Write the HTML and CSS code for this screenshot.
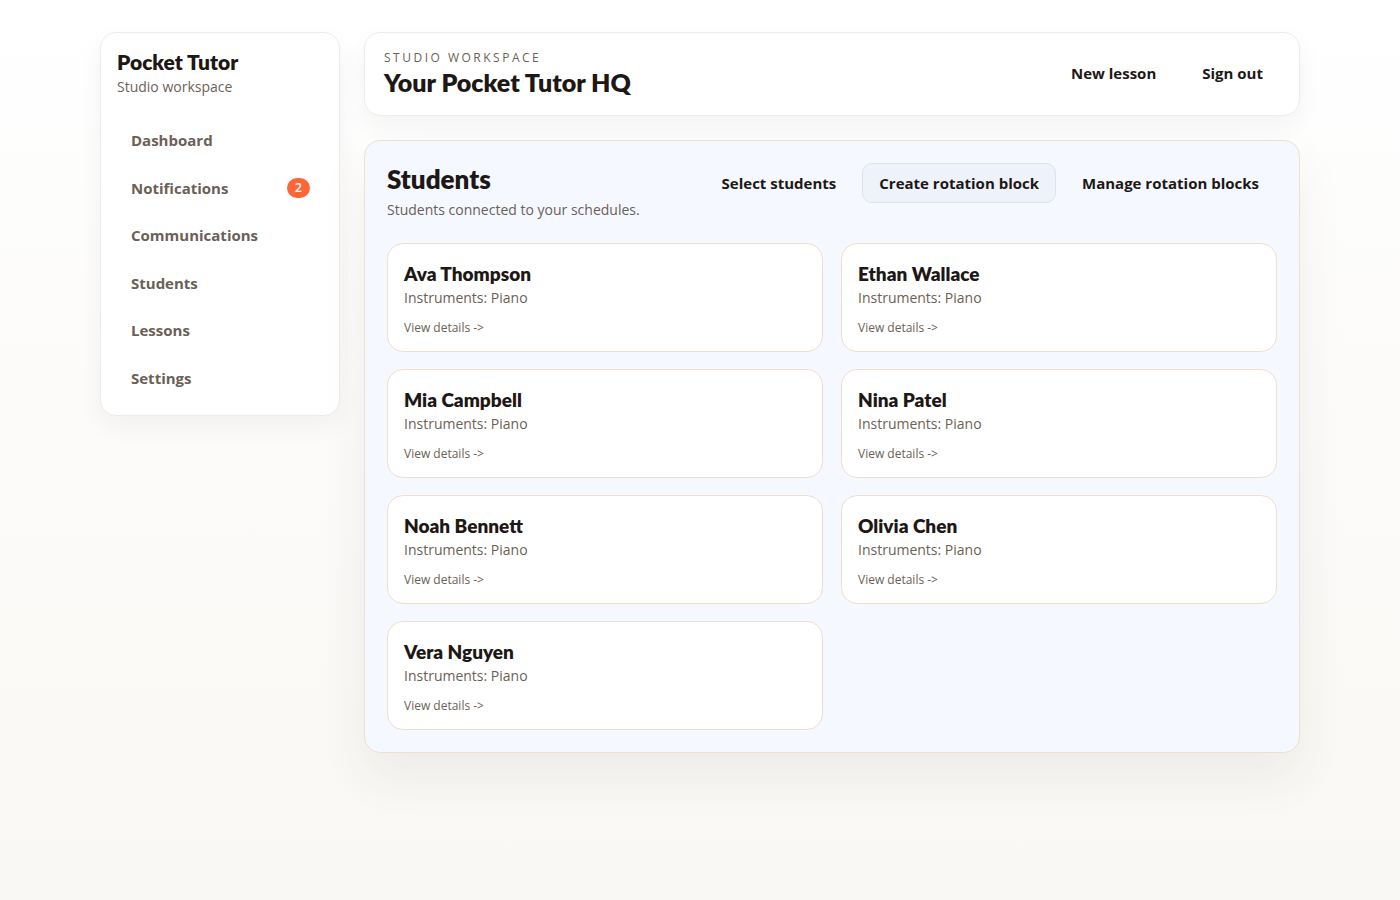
FILE: index.html
```html
<!DOCTYPE html>
<html lang="en">
<head>
    <meta charset="UTF-8">
    <meta name="viewport" content="width=device-width, initial-scale=1.0">
    <title>Students - Pocket Tutor</title>
    <link rel="stylesheet" href="styles.css">
</head>
<body>
    <div class="layout">
        <!-- Sidebar -->
        <aside class="sidebar">
            <div class="brand">
                <h1>Pocket Tutor</h1>
                <p>Studio workspace</p>
            </div>
            <nav class="nav">
                <a href="#">Dashboard</a>
                <a href="#">Notifications <span class="badge">2</span></a>
                <a href="#">Communications</a>
                <a href="#">Students</a>
                <a href="#">Lessons</a>
                <a href="#">Settings</a>
            </nav>
        </aside>

        <main class="main">
            <!-- Top header -->
            <header class="topbar">
                <div>
                    <p class="eyebrow">Studio workspace</p>
                    <h2>Your Pocket Tutor HQ</h2>
                </div>
                <div class="topbar-actions">
                    <button class="btn">New lesson</button>
                    <button class="btn">Sign out</button>
                </div>
            </header>

            <!-- Students panel -->
            <section class="panel">
                <div class="panel-head">
                    <div>
                        <h3>Students</h3>
                        <p>Students connected to your schedules.</p>
                    </div>
                    <div class="panel-actions">
                        <button class="btn">Select students</button>
                        <button class="btn btn-soft">Create rotation block</button>
                        <button class="btn">Manage rotation blocks</button>
                    </div>
                </div>

                <div class="student-grid">
                    <div class="student-card">
                        <h4>Ava Thompson</h4>
                        <p>Instruments: Piano</p>
                        <a href="#">View details -&gt;</a>
                    </div>
                    <div class="student-card">
                        <h4>Ethan Wallace</h4>
                        <p>Instruments: Piano</p>
                        <a href="#">View details -&gt;</a>
                    </div>
                    <div class="student-card">
                        <h4>Mia Campbell</h4>
                        <p>Instruments: Piano</p>
                        <a href="#">View details -&gt;</a>
                    </div>
                    <div class="student-card">
                        <h4>Nina Patel</h4>
                        <p>Instruments: Piano</p>
                        <a href="#">View details -&gt;</a>
                    </div>
                    <div class="student-card">
                        <h4>Noah Bennett</h4>
                        <p>Instruments: Piano</p>
                        <a href="#">View details -&gt;</a>
                    </div>
                    <div class="student-card">
                        <h4>Olivia Chen</h4>
                        <p>Instruments: Piano</p>
                        <a href="#">View details -&gt;</a>
                    </div>
                    <div class="student-card">
                        <h4>Vera Nguyen</h4>
                        <p>Instruments: Piano</p>
                        <a href="#">View details -&gt;</a>
                    </div>
                </div>
            </section>
        </main>
    </div>
</body>
</html>
```

FILE: styles.css
```css
/* Base */
* {
    margin: 0;
    padding: 0;
    box-sizing: border-box;
}

body {
    font-family: 'Open Sans', 'Noto Sans', sans-serif;
    color: #1d1815;
    min-height: 100vh;
    background: linear-gradient(180deg, #ffffff 0%, #fbfaf8 60%, #f9f8f4 100%);
}

h1, h2, h3, h4 {
    font-family: 'Lato', 'Open Sans', sans-serif;
    font-weight: 800;
    color: #1d1815;
}

button {
    font-family: inherit;
    background: none;
    border: 0;
    cursor: pointer;
}

a {
    text-decoration: none;
}

/* Layout */
.layout {
    width: 1200px;
    margin: 0 auto;
    padding-top: 32px;
    display: grid;
    grid-template-columns: 240px 1fr;
    gap: 24px;
    align-items: start;
}

/* Sidebar */
.sidebar {
    background: #fff;
    border: 1px solid #eeecea;
    border-radius: 16px;
    box-shadow: 0 10px 24px rgba(60, 45, 30, 0.05);
    padding: 15px 16px 12px;
}

.brand h1 {
    font-size: 21px;
    line-height: 28px;
}

.brand p {
    font-size: 14px;
    line-height: 20px;
    margin-top: 1px;
    color: #6d625a;
}

.nav {
    display: flex;
    flex-direction: column;
    margin-top: 20px;
}

.nav a {
    display: flex;
    justify-content: space-between;
    align-items: center;
    padding: 12px 14px;
    line-height: 23.6px;
    font-size: 15px;
    font-weight: 700;
    color: #6b5f56;
}

.badge {
    background: #ff6636;
    color: #fff;
    font-size: 12px;
    font-weight: 600;
    line-height: 20px;
    min-width: 23px;
    padding: 0 6px;
    text-align: center;
    border-radius: 10px;
    margin-right: -1px;
}

/* Main column */
.main {
    display: flex;
    flex-direction: column;
    gap: 24px;
}

.topbar {
    background: #fff;
    border: 1px solid #eeecea;
    border-radius: 16px;
    box-shadow: 0 10px 24px rgba(60, 45, 30, 0.05);
    padding: 17px 18px 17px 19px;
    display: flex;
    justify-content: space-between;
    align-items: center;
}

.eyebrow {
    font-size: 12px;
    line-height: 16px;
    letter-spacing: 2.5px;
    text-transform: uppercase;
    color: #6b5f56;
}

.topbar h2 {
    font-size: 25px;
    line-height: 32px;
}

.topbar-actions {
    display: flex;
    gap: 10px;
    margin-top: -2px;
}

.btn {
    font-size: 15px;
    font-weight: 700;
    color: #1d1815;
    padding: 9px 17px;
    line-height: 20px;
    border: 1px solid transparent;
    border-radius: 10px;
}

.btn-soft {
    background: #eef2fb;
    border-color: #dde2ee;
    padding: 9px 16px;
}

/* Students panel */
.panel {
    background: #f5f8ff;
    border: 1px solid #f0dfcd;
    border-radius: 16px;
    box-shadow: 0 24px 48px rgba(80, 60, 40, 0.07);
    padding: 22px;
}

.panel-head {
    display: flex;
    justify-content: space-between;
    align-items: flex-start;
    margin-bottom: 22px;
}

.panel-head h3 {
    font-size: 26px;
    line-height: 32px;
}

.panel-head p {
    font-size: 14px;
    line-height: 22px;
    margin-top: 4px;
    color: #6b5f56;
}

.panel-actions {
    display: flex;
    gap: 8px;
}

.student-grid {
    display: grid;
    grid-template-columns: 1fr 1fr;
    gap: 17px 18px;
}

.student-card {
    background: #fff;
    border: 1px solid #f0dfcd;
    border-radius: 16px;
    padding: 18px 16px 14px;
}

.student-card h4 {
    font-size: 19px;
    line-height: 24px;
}

.student-card p {
    font-size: 14px;
    line-height: 22px;
    margin-top: 1px;
    color: #6b5f56;
}

.student-card a {
    display: block;
    margin-top: 10px;
    font-size: 12px;
    line-height: 18px;
    color: #6b5f56;
}
```
